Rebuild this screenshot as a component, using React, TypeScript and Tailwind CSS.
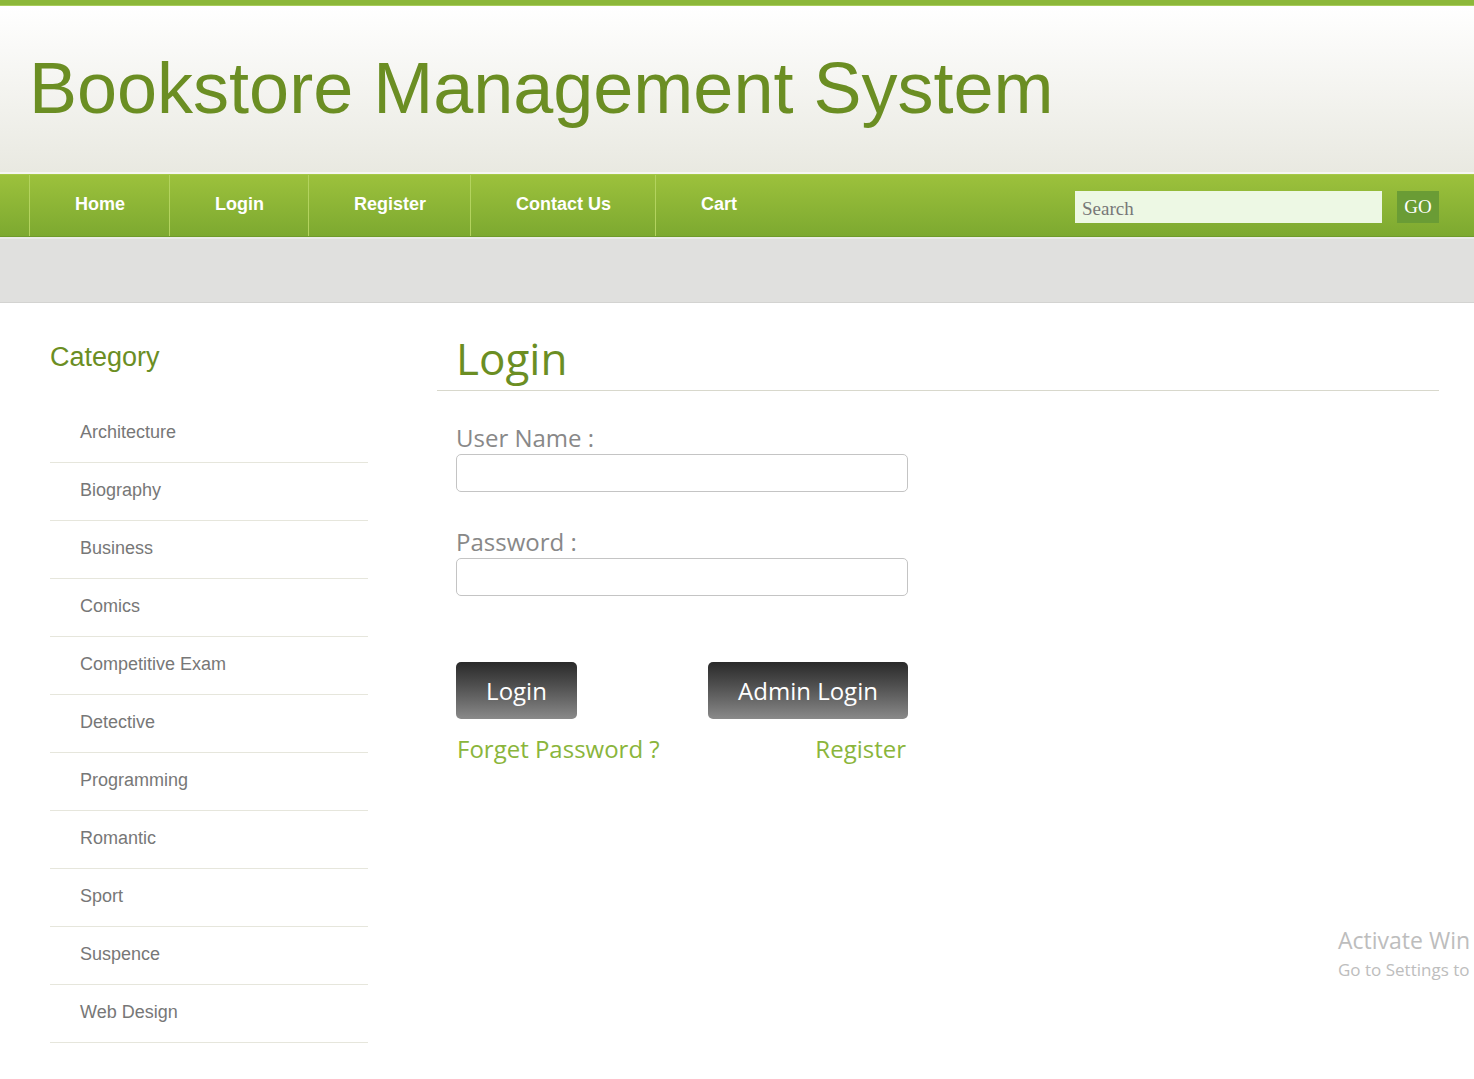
import React from "react";

const categories = [
  "Architecture",
  "Biography",
  "Business",
  "Comics",
  "Competitive Exam",
  "Detective",
  "Programming",
  "Romantic",
  "Sport",
  "Suspence",
  "Web Design",
];

const navItems = ["Home", "Login", "Register", "Contact Us", "Cart"];

export default function App() {
  return (
    <div className="relative min-h-screen w-full overflow-hidden bg-white">
      {/* top strip */}
      <div className="h-[6px] bg-[#8cb83a] border-b border-[#a9cc5c]" />

      {/* header */}
      <div className="h-[166px] bg-gradient-to-b from-white to-[#e9e9e1] pl-[29px] pt-[46px]">
        <h1 className="font-['Liberation_Sans',Arial,sans-serif] text-[72px] leading-none text-[#6b8e23]">
          Bookstore Management System
        </h1>
      </div>

      {/* nav */}
      <div className="h-[2px] bg-[#f6f6f2]" />
      <div className="flex h-[63px] items-stretch border-t border-[#a6c948] border-b border-b-[#6f9b2b] bg-gradient-to-b from-[#9cc13c] to-[#7da930] pl-[29px] pr-[35px]">
        <ul className="flex items-stretch font-['Liberation_Sans',Arial,sans-serif] text-[18px] font-bold text-white">
          {navItems.map((item) => (
            <li
              key={item}
              className="flex items-center border-l border-[#b3d35e] pl-[45px] pr-[44px] pb-[2px]"
            >
              {item}
            </li>
          ))}
        </ul>
        <div className="ml-auto flex items-center gap-[15px] pt-[2px]">
          <div className="flex h-[32px] w-[307px] items-center bg-[#edf8e4] px-[7px] pt-[5px] font-['Liberation_Serif',Georgia,serif] text-[19px] text-[#777]">
            Search
          </div>
          <div className="flex h-[32px] w-[42px] items-center justify-center bg-[#6a9c35] pt-[2px] font-['Liberation_Serif',Georgia,serif] text-[19px] text-white">
            GO
          </div>
        </div>
      </div>

      {/* gray band */}
      <div className="h-[2px] bg-[#ebebe9]" />
      <div className="h-[64px] border-b border-[#d3d3d1] bg-[#e0e0de]" />

      {/* content */}
      <div className="flex pl-[50px] pr-[35px]">
        {/* sidebar */}
        <div className="w-[318px] shrink-0 pt-[41px]">
          <h2 className="font-['Liberation_Sans',Arial,sans-serif] text-[27px] leading-none text-[#6b8e23]">
            Category
          </h2>
          <ul className="mt-[34px] font-['Liberation_Sans',Arial,sans-serif] text-[18px] text-[#777]">
            {categories.map((c) => (
              <li
                key={c}
                className="flex h-[58px] items-center border-b border-[#e6e6dc] pl-[30px] pb-[2px]"
              >
                {c}
              </li>
            ))}
          </ul>
        </div>

        {/* main */}
        <div className="ml-[69px] flex-1 font-['Open_Sans',sans-serif]">
          <div className="border-b border-[#d8d8cc] pb-[10px] pl-[19px] pt-[33px]">
            <h2 className="text-[44px] leading-none text-[#6b8e23]">Login</h2>
          </div>

          <div className="w-[472px] pl-[19px] pt-[35px]">
            <label className="block text-[24px] leading-none text-[#888]">
              User Name :
            </label>
            <div className="mt-[4px] h-[38px] w-[452px] rounded-[5px] border border-[#c4c4c4] bg-white" />

            <label className="mt-[38px] block text-[24px] leading-none text-[#888]">
              Password :
            </label>
            <div className="mt-[4px] h-[38px] w-[452px] rounded-[5px] border border-[#c4c4c4] bg-white" />

            <div className="mt-[66px] flex w-[452px] justify-between">
              <button className="h-[57px] w-[121px] rounded-[5px] bg-gradient-to-b from-[#2a2a2a] to-[#8a8a8a] text-[24px] text-white">
                Login
              </button>
              <button className="h-[57px] w-[200px] rounded-[5px] bg-gradient-to-b from-[#2a2a2a] to-[#8a8a8a] text-[24px] text-white">
                Admin Login
              </button>
            </div>

            <div className="mt-[18px] flex w-[452px] justify-between pl-[1px] pr-[2px] text-[24px] leading-none text-[#8ab53b]">
              <a href="#">Forget Password ?</a>
              <a href="#">Register</a>
            </div>
          </div>
        </div>
      </div>

      {/* activation watermark */}
      <div className="pointer-events-none absolute left-[1338px] top-[925px] whitespace-nowrap font-['Open_Sans',sans-serif] text-[#bdbdbd]">
        <div className="text-[23px] leading-[30px]">Activate Win</div>
        <div className="mt-[3px] text-[17px] leading-[24px]">Go to Settings to</div>
      </div>
    </div>
  );
}
